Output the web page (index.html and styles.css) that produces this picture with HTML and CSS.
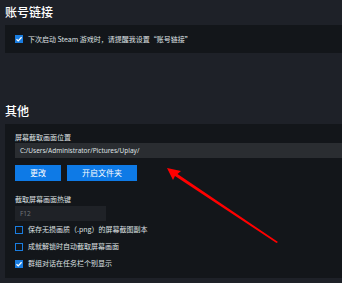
FILE: index.html
```html
<!DOCTYPE html>
<html lang="zh">
<head>
<meta charset="utf-8">
<link rel="stylesheet" href="styles.css">
</head>
<body>
<div class="page">
  <h2 class="title t1">账号链接</h2>
  <div class="panel p1">
    <label class="row">
      <span class="cb on"><svg viewBox="0 0 8 8" width="8" height="8"><path d="M1.5 4.3 L3.2 5.9 L6.6 2.2" fill="none" stroke="#fff" stroke-width="1.3"/></svg></span>
      <span class="txt">下次启动 Steam 游戏时，请提醒我设置“账号链接”</span>
    </label>
  </div>
  <h2 class="title t2">其他</h2>
  <div class="panel p2">
    <div class="lbl">屏幕截取画面位置</div>
    <div class="input path">C:/Users/Administrator/Pictures/Uplay/</div>
    <div class="btns">
      <button class="btn b1">更改</button>
      <button class="btn b2">开启文件夹</button>
    </div>
    <div class="lbl l2">截取屏幕画面热键</div>
    <div class="input key">F12</div>
    <label class="row r1">
      <span class="cb"></span>
      <span class="txt">保存无损画质（.png）的屏幕截图副本</span>
    </label>
    <label class="row r2">
      <span class="cb"></span>
      <span class="txt">成就解锁时自动截取屏幕画面</span>
    </label>
    <label class="row r2">
      <span class="cb on"><svg viewBox="0 0 8 8" width="8" height="8"><path d="M1.5 4.3 L3.2 5.9 L6.6 2.2" fill="none" stroke="#fff" stroke-width="1.3"/></svg></span>
      <span class="txt">群组对话在任务栏个别显示</span>
    </label>
  </div>
</div>
<svg class="arrow" width="342" height="283" viewBox="0 0 342 283">
  <polygon points="167,168 181,171 177.5,174 278,242 276.5,243 175,176 173,180" fill="#ff0000"/>
</svg>
</body>
</html>
```
FILE: styles.css
```css
html, body {
  margin: 0;
  padding: 0;
  background: #1e2128;
  width: 342px;
  height: 283px;
  overflow: hidden;
  font-family: "Noto Sans CJK SC", "Noto Sans", sans-serif;
  color: #dfe1e3;
}
.page {
  padding-left: 5px;
  display: flex;
  flex-direction: column;
}
.title {
  margin: 0;
  font-size: 12px;
  font-weight: 500;
  color: #ffffff;
  line-height: 20px;
}
.t1 { margin-top: 2px; margin-bottom: 3px; }
.t2 { margin-top: 48px; margin-bottom: 3px; }
.panel {
  background: #13161a;
  padding-left: 10px;
}
.p1 {
  height: 28px;
  display: flex;
  align-items: center;
}
.p2 {
  height: 154px;
  padding-top: 9px;
  box-sizing: border-box;
}
.row {
  display: flex;
  align-items: center;
  gap: 5px;
  font-size: 7px;
  line-height: 9px;
}
.cb {
  width: 8px;
  height: 8px;
  box-sizing: border-box;
  border: 1px solid #1a7de0;
  display: flex;
  align-items: center;
  justify-content: center;
}
.cb.on {
  background: #1a7de0;
  border: none;
}
.txt { white-space: nowrap; }
.lbl {
  font-size: 7px;
  line-height: 9px;
  color: #dfe1e3;
}
.input {
  margin-top: 1px;
  height: 15px;
  line-height: 15px;
  font-size: 6.5px;
  padding-left: 5px;
  box-sizing: border-box;
  font-family: "Noto Sans", sans-serif;
}
.path {
  background: #2a2d31;
  color: #dfe1e3;
}
.key {
  width: 91px;
  background: #1f2227;
  color: #6f7378;
  margin-top: 2px;
}
.btns {
  display: flex;
  gap: 6px;
  margin-top: 7px;
}
.btn {
  height: 16px;
  border: none;
  padding: 0;
  background: #0e7ae6;
  color: #ffffff;
  font-family: "Noto Sans CJK SC", sans-serif;
  font-size: 8px;
  line-height: 16px;
}
.b1 { width: 46px; }
.b2 { width: 70px; }
.l2 { margin-top: 14px; }
.r1 { margin-top: 4px; }
.r2 { margin-top: 8px; }
.arrow {
  position: absolute;
  left: 0;
  top: 0;
  pointer-events: none;
}
```
